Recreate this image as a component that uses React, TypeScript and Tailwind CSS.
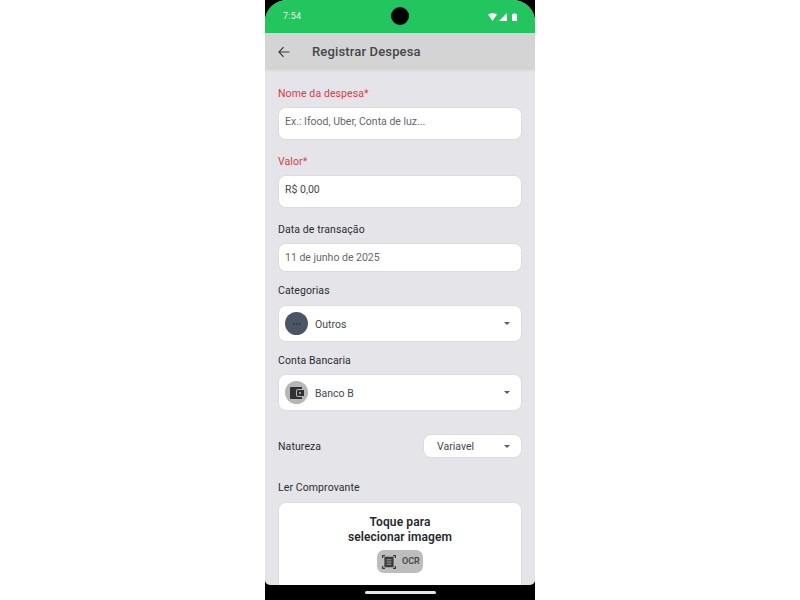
import React from "react";

const Caret = () => (
  <svg width="6" height="3" viewBox="0 0 6 3" className="mx-[1px] shrink-0"><path d="M0 0h6L3 3z" fill="#5a5e64" /></svg>
);

const Label = ({ children, red }: { children: React.ReactNode; red?: boolean }) => (
  <div className={`h-[14px] text-[10.5px] leading-[14px] font-normal tracking-[0.1px] ${red ? "text-[#dc3b3f]" : "text-[#2b2d31]"}`}>{children}</div>
);

const Input = ({ children, h, color, raised }: { children: React.ReactNode; h: string; color: string; raised?: boolean }) => (
  <div className={`${h} ${raised ? "pb-[3px]" : ""} flex items-center rounded-[8px] border border-[#dcdce0] bg-white px-[6px] text-[10.5px] ${color}`}>{children}</div>
);

const Select = ({ icon, text }: { icon: React.ReactNode; text: string }) => (
  <div className="flex h-[37px] items-center rounded-[8px] border border-[#dcdce0] bg-white pl-[6px] pr-[10px]">
    {icon}
    <span className="ml-[7px] flex-1 pt-[2px] text-[10.5px] text-[#44474b]">{text}</span>
    <Caret />
  </div>
);

export default function App() {
  return (
    <div className="flex h-[600px] w-[800px] justify-center bg-white font-['Roboto',sans-serif]">
      <div className="flex h-[600px] w-[270px] flex-col overflow-hidden bg-black">
        <div className="flex h-[585px] flex-col overflow-hidden rounded-t-[22px] rounded-b-[5px] bg-[#e4e4e9]">
          <div className="relative flex h-[33px] shrink-0 items-center justify-between bg-[#22c55e] pl-[18px] pr-[18px]">
            <span className="text-[9px] tracking-[0.2px] text-[#e6f8ec]">7:54</span>
            <div className="absolute left-[126px] top-[7px] h-[18px] w-[18px] rounded-full bg-black" />
            <svg width="29" height="8" viewBox="0 0 29 8" fill="white">
              <path d="M0 1.5C1.5.5 3 0 4.5 0S7.5.5 9 1.5L4.5 8z" />
              <path d="M11 8l8-8v8z" />
              <path d="M24 1.5a.6.6 0 0 1 .6-.6h1V0h1.8v.9h1a.6.6 0 0 1 .6.6V8h-5z" />
            </svg>
          </div>
          <div className="flex h-[37px] shrink-0 items-center bg-[#d4d4d4] pl-[13px] shadow-[0_1px_2px_rgba(0,0,0,0.05)]">
            <svg width="12" height="12" viewBox="0 0 12 12" fill="none" stroke="#3b3d40" strokeWidth="1.2"><path d="M11.5 6H1M5.6 1.2L.9 6l4.7 4.8" /></svg>
            <span className="ml-[22px] text-[13px] font-medium tracking-[0.15px] text-[#45474b]">Registrar Despesa</span>
          </div>
          <div className="flex flex-1 flex-col overflow-hidden px-[13px] pt-[17px]">
            <Label red>Nome da despesa*</Label>
            <div className="mt-[6px]"><Input raised h="h-[33px]" color="text-[#65686c]">Ex.: Ifood, Uber, Conta de luz...</Input></div>
            <div className="mt-[15px]"><Label red>Valor*</Label></div>
            <div className="mt-[6px]"><Input raised h="h-[33px]" color="text-[#44474b]">R$ 0,00</Input></div>
            <div className="mt-[15px]"><Label>Data de transação</Label></div>
            <div className="mt-[6px]"><Input h="h-[29px]" color="text-[#65686c]">11 de junho de 2025</Input></div>
            <div className="mt-[12px]"><Label>Categorias</Label></div>
            <div className="mt-[7px]">
              <Select text="Outros" icon={
                <div className="flex h-[23px] w-[23px] items-center justify-center rounded-full bg-[#4b5563]">
                  <svg width="8" height="2" viewBox="0 0 8 2" fill="#2f3640"><circle cx="1" cy="1" r=".9" /><circle cx="4" cy="1" r=".9" /><circle cx="7" cy="1" r=".9" /></svg>
                </div>} />
            </div>
            <div className="mt-[12px]"><Label>Conta Bancaria</Label></div>
            <div className="mt-[6px]">
              <Select text="Banco B" icon={
                <div className="flex h-[23px] w-[23px] items-center justify-center rounded-full bg-[#b6b6b6]">
                  <svg width="14" height="12" viewBox="0 0 14 12" fill="#2f3133"><path fillRule="evenodd" d="M1 0h11v2H8a2 2 0 0 0-2 2v4a2 2 0 0 0 2 2h4v2H1a1 1 0 0 1-1-1V1a1 1 0 0 1 1-1zm7 3h6v6H8a1 1 0 0 1-1-1V4a1 1 0 0 1 1-1zm2 2a1 1 0 1 0 0 2 1 1 0 0 0 0-2z" /></svg>
                </div>} />
            </div>
            <div className="mt-[23px] flex items-center justify-between">
              <div className="pt-[2px]"><Label>Natureza</Label></div>
              <div className="flex h-[24px] w-[99px] items-center rounded-[8px] border border-[#dcdce0] bg-white pl-[13px] pr-[10px]">
                <span className="flex-1 pt-[2px] text-[10.5px] text-[#44474b]">Variavel</span>
                <Caret />
              </div>
            </div>
            <div className="mt-[23px]"><Label>Ler Comprovante</Label></div>
            <div className="mt-[7px] flex h-[120px] shrink-0 flex-col items-center rounded-t-[8px] border border-[#dcdce0] bg-white pt-[12px]">
              <div className="text-center text-[12px] font-semibold leading-[15px] tracking-[0.1px] text-[#26282b]">Toque para<br />selecionar imagem</div>
              <div className="mt-[5px] flex h-[23px] w-[46px] items-center rounded-[7px] bg-[#bdbdbd] pl-[5px]">
                <svg width="14" height="14" viewBox="0 0 14 14" fill="none" stroke="#3a3c3f" strokeWidth="1.2">
                  <path d="M.6 3V.6H3M11 .6h2.4V3M.6 11v2.4H3M11 13.4h2.4V11" />
                  <rect x="2.4" y="1.8" width="9.2" height="10.4" rx=".6" fill="#3a3c3f" stroke="none" />
                  <path d="M4.6 4.8h4.8M4.6 7h4.8M4.6 9.2h4.8" stroke="#bdbdbd" strokeWidth=".8" />
                </svg>
                <span className="ml-[6px] text-[9px] font-semibold text-[#45474a]">OCR</span>
              </div>
            </div>
          </div>
        </div>
        <div className="flex flex-1 items-center justify-center">
          <div className="h-[3px] w-[71px] rounded-full bg-[#e5e5e5]" />
        </div>
      </div>
    </div>
  );
}
